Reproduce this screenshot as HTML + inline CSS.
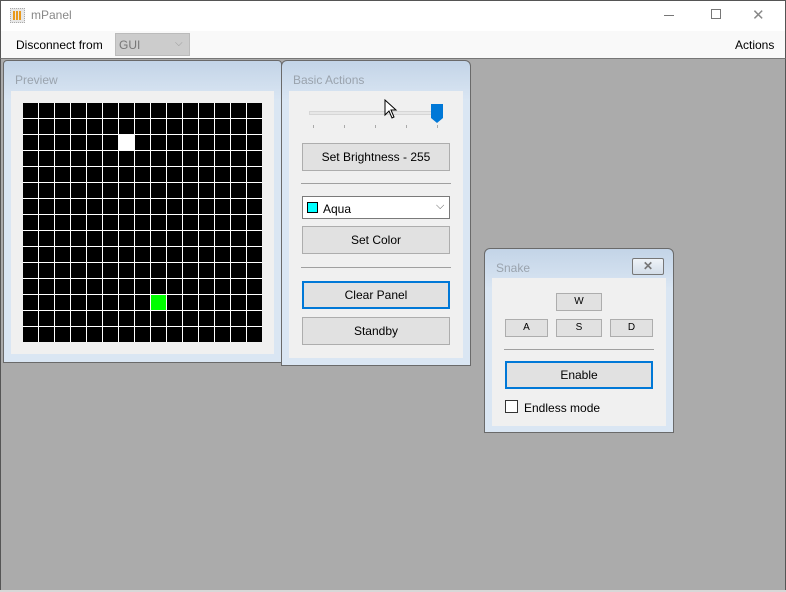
<!DOCTYPE html>
<html><head><style>
*{margin:0;padding:0;box-sizing:border-box}
body{width:786px;height:592px;position:relative;overflow:hidden;font-family:"Liberation Sans",sans-serif;font-size:12px;background:#ababab}
.a{position:absolute}
.btn{position:absolute;background:#e1e1e1;border:1px solid #adadad;text-align:center;color:#000}
.frame{position:absolute;border:1px solid #6a6a6a;border-radius:4px 4px 0 0;background:linear-gradient(#c3d4e7,#dae6f3 40px,#dae6f3)}
.inner{position:absolute;background:#f0f0f0}
.ttl{position:absolute;color:#9aa3ad;font-size:12px}
.grid{position:absolute;left:23px;top:103px;width:239px;height:239px;background:#fff;display:grid;grid-template-columns:repeat(15,15px);grid-template-rows:repeat(15,15px);gap:1px}
.grid div{background:#000}
.sep{position:absolute;height:1px;background:#a0a0a0}
</style></head><body>
<div class="a" style="left:0;top:0;width:786px;height:31px;background:#fff;border:1px solid #555;border-bottom:none"></div>
<div class="a" style="left:10px;top:8px;width:15px;height:15px;background:#e8e8e8;border:1px dotted #aaa"><div class="a" style="left:2px;top:2px;width:9px;height:9px;background:repeating-linear-gradient(90deg,#e99a1c 0 2px,transparent 2px 3px)"></div></div>
<div class="a" style="left:31px;top:8px;color:#888;font-size:12px">mPanel</div>
<div class="a" style="left:664px;top:15px;width:10px;height:1px;background:#777"></div>
<div class="a" style="left:711px;top:9px;width:10px;height:10px;border:1px solid #777"></div>
<div class="a" style="left:752px;top:6px;color:#888;font-size:15px">✕</div>
<div class="a" style="left:0;top:31px;width:786px;height:28px;background:#f9f9f9;border-left:1px solid #555;border-right:1px solid #555;border-bottom:1px solid #777"></div>
<div class="a" style="left:16px;top:38px;color:#000">Disconnect from</div>
<div class="a" style="left:115px;top:33px;width:75px;height:23px;background:#ccc;border:1px solid #bbb"></div>
<div class="a" style="left:119px;top:38px;color:#777">GUI</div>
<div class="a" style="left:175px;top:38px;color:#999;font-size:10px">⌵</div>
<div class="a" style="left:735px;top:38px;color:#000">Actions</div>
<div class="a" style="left:0;top:59px;width:4px;height:533px;background:#ababab;border-left:1px solid #555"></div>
<div class="a" style="left:782px;top:59px;width:4px;height:533px;background:#ababab;border-right:1px solid #555"></div>
<div class="a" style="left:0;top:590px;width:786px;height:2px;background:#d8d8d8"></div>

<div class="frame" style="left:3px;top:60px;width:279px;height:303px"></div>
<div class="ttl" style="left:15px;top:73px">Preview</div>
<div class="inner" style="left:11px;top:91px;width:263px;height:263px"></div>
<div class="grid" id="g"></div>

<div class="frame" style="left:281px;top:60px;width:190px;height:306px;border-radius:6px 6px 0 0"></div>
<div class="ttl" style="left:293px;top:73px">Basic Actions</div>
<div class="inner" style="left:289px;top:91px;width:174px;height:267px"></div>
<div class="a" style="left:309px;top:111px;width:132px;height:4px;background:#e7e7e7;border:1px solid #d6d6d6"></div>
<div class="a" style="left:313px;top:125px;width:126px;height:3px;background:repeating-linear-gradient(90deg,#aaa 0 1px,transparent 1px 31px)"></div>
<svg class="a" style="left:431px;top:104px" width="12" height="20"><path d="M0 0H12V14L6 19L0 14Z" fill="#0078d7"/></svg>
<svg class="a" style="left:384px;top:99px" width="14" height="20"><path d="M1 1V16L5 12L8 19L10 18L7 11H12Z" fill="#fff" stroke="#000"/></svg>
<div class="btn" style="left:302px;top:143px;width:148px;height:28px;line-height:26px">Set Brightness - 255</div>
<div class="sep" style="left:301px;top:183px;width:150px"></div>
<div class="a" style="left:302px;top:196px;width:148px;height:23px;background:#fff;border:1px solid #7a7a7a"></div>
<div class="a" style="left:307px;top:202px;width:11px;height:11px;background:#0ff;border:1px solid #000"></div>
<div class="a" style="left:323px;top:202px">Aqua</div>
<div class="a" style="left:436px;top:200px;font-size:11px;color:#555">⌵</div>
<div class="btn" style="left:302px;top:226px;width:148px;height:28px;line-height:26px">Set Color</div>
<div class="sep" style="left:301px;top:267px;width:150px"></div>
<div class="btn" style="left:302px;top:281px;width:148px;height:28px;line-height:24px;border:2px solid #0078d7">Clear Panel</div>
<div class="btn" style="left:302px;top:317px;width:148px;height:28px;line-height:26px">Standby</div>

<div class="frame" style="left:484px;top:248px;width:190px;height:185px;border-radius:6px 6px 0 0"></div>
<div class="ttl" style="left:496px;top:261px">Snake</div>
<div class="a" style="left:632px;top:258px;width:32px;height:17px;border:1px solid #777;border-radius:2px;background:linear-gradient(#eef3f8,#d3dde8);text-align:center;font-size:12px;line-height:15px;color:#777;font-weight:bold">✕</div>
<div class="inner" style="left:492px;top:278px;width:174px;height:148px"></div>
<div class="btn" style="left:556px;top:293px;width:46px;height:18px;line-height:16px;font-size:10px">W</div>
<div class="btn" style="left:505px;top:319px;width:43px;height:18px;line-height:16px;font-size:10px">A</div>
<div class="btn" style="left:556px;top:319px;width:46px;height:18px;line-height:16px;font-size:10px">S</div>
<div class="btn" style="left:610px;top:319px;width:43px;height:18px;line-height:16px;font-size:10px">D</div>
<div class="sep" style="left:504px;top:349px;width:150px"></div>
<div class="btn" style="left:505px;top:361px;width:148px;height:28px;line-height:24px;border:2px solid #0078d7">Enable</div>
<div class="a" style="left:505px;top:400px;width:13px;height:13px;background:#fff;border:1px solid #333"></div>
<div class="a" style="left:524px;top:401px">Endless mode</div>
<script>
var g=document.getElementById('g');
for(var i=0;i<225;i++){var d=document.createElement('div');var r=Math.floor(i/15),c=i%15;
if(r==2&&c==6)d.style.background='#fff';
if(r==12&&c==8)d.style.background='#00ff00';
g.appendChild(d);}
</script>
</body></html>
